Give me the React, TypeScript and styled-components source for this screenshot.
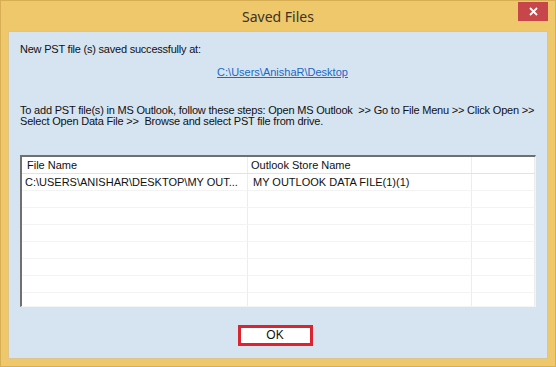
import React from 'react';
import styled, { createGlobalStyle } from 'styled-components';

const GlobalStyle = createGlobalStyle`
  html, body {
    margin: 0;
    padding: 0;
    background: #efc76b;
  }
`;

const Window = styled.div`
  width: 556px;
  height: 367px;
  box-sizing: border-box;
  background: #efc86c;
  border: 1px solid #d8ae55;
  display: flex;
  flex-direction: column;
  font-family: 'Liberation Sans', Arial, sans-serif;
`;

const TitleBar = styled.div`
  position: relative;
  height: 30px;
  display: flex;
  align-items: center;
  justify-content: center;
`;

const Title = styled.div`
  font-family: 'Noto Sans', 'Open Sans', sans-serif;
  font-size: 14px;
  color: #3a3326;
  margin-top: 1px;
`;

const CloseButton = styled.div`
  position: absolute;
  top: 1px;
  right: 7px;
  width: 30px;
  height: 19px;
  background: #c7464a;
  display: flex;
  align-items: center;
  justify-content: center;
`;

const Client = styled.div`
  flex: 1;
  margin: 0 7px 7px 7px;
  background: #d6e4f2;
  border: 1px solid #dcc48c;
  display: flex;
  flex-direction: column;
  padding: 0 10px 0 11px;
  font-size: 11px;
  color: #111;
`;

const Message = styled.div`
  margin-top: 11px;
  line-height: 13px;
  letter-spacing: -0.22px;
`;

const PathLink = styled.a`
  align-self: center;
  margin-top: 10px;
  margin-left: 8px;
  color: #2068c4;
  text-decoration: underline;
  line-height: 13px;
`;

const Steps = styled.div`
  margin-top: 26px;
  line-height: 11px;
  white-space: pre;
  letter-spacing: -0.2px;
`;

const Grid = styled.div`
  margin-top: 28px;
  height: 152px;
  box-sizing: border-box;
  background: #fff;
  border-top: 2px solid #707070;
  border-left: 2px solid #707070;
  border-right: 1px solid #f4f4f4;
  border-bottom: 1px solid #f4f4f4;
  overflow: hidden;
  margin-right: 1px;
`;

const Row = styled.div<{ $header?: boolean }>`
  display: grid;
  grid-template-columns: 226px 224px 1fr;
  height: 17px;
  border-bottom: 1px solid ${(p) => (p.$header ? '#e3e3e3' : '#f3f3f3')};
  box-sizing: border-box;
`;

const Cell = styled.div<{ $pad?: number }>`
  border-right: 1px solid #ececec;
  padding-left: ${(p) => p.$pad ?? 5}px;
  line-height: 16px;
  white-space: nowrap;
  overflow: hidden;
  color: #111;
`;

const Footer = styled.div`
  flex: 1;
  display: flex;
  align-items: center;
  justify-content: center;
  padding-right: 7px;
  padding-top: 5px;
`;

const OkButton = styled.button`
  width: 75px;
  height: 21px;
  box-sizing: border-box;
  background: #fff;
  border: 3px solid #dc2330;
  font-family: 'Liberation Sans', Arial, sans-serif;
  font-size: 12px;
  color: #111;
  padding: 0;
`;

const rows = [
  { file: 'C:\\USERS\\ANISHAR\\DESKTOP\\MY OUT...', store: 'MY OUTLOOK DATA FILE(1)(1)' },
];

const emptyRows = 7;

export default function App() {
  return (
    <>
      <GlobalStyle />
      <Window>
        <TitleBar>
          <Title>Saved Files</Title>
          <CloseButton>
            <svg width="9" height="9" viewBox="0 0 9 9">
              <path d="M1 1 L8 8 M8 1 L1 8" stroke="#fff" strokeWidth="1.8" />
            </svg>
          </CloseButton>
        </TitleBar>
        <Client>
          <Message>New PST file (s) saved successfully at:</Message>
          <PathLink>C:\Users\AnishaR\Desktop</PathLink>
          <Steps>
            {'To add PST file(s) in MS Outlook, follow these steps: Open MS Outlook  >> Go to File Menu >> Click Open >>\nSelect Open Data File >>  Browse and select PST file from drive.'}
          </Steps>
          <Grid>
            <Row $header>
              <Cell $pad={5}>File Name</Cell>
              <Cell $pad={3}>Outlook Store Name</Cell>
              <Cell />
            </Row>
            {rows.map((r) => (
              <Row key={r.file}>
                <Cell $pad={3}>{r.file}</Cell>
                <Cell $pad={5}>{r.store}</Cell>
                <Cell />
              </Row>
            ))}
            {Array.from({ length: emptyRows }).map((_, i) => (
              <Row key={i}>
                <Cell />
                <Cell />
                <Cell />
              </Row>
            ))}
          </Grid>
          <Footer>
            <OkButton>OK</OkButton>
          </Footer>
        </Client>
      </Window>
    </>
  );
}
